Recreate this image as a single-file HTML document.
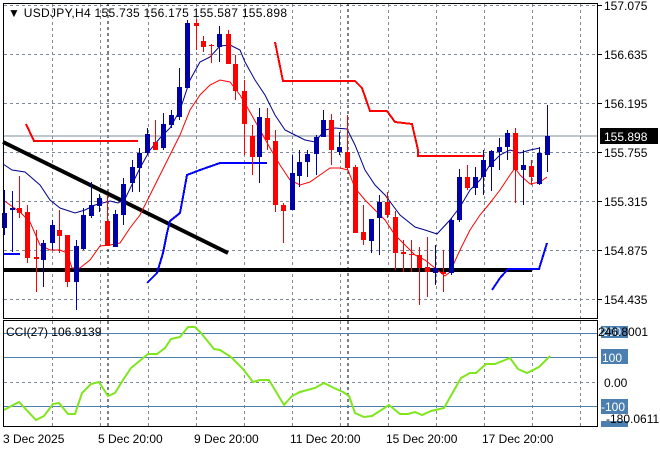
<!DOCTYPE html>
<html><head><meta charset="utf-8">
<style>
html,body{margin:0;padding:0;background:#fff;width:660px;height:450px;overflow:hidden}
svg{display:block}
text{font-family:"Liberation Sans",sans-serif;font-size:12px;fill:#000}
</style></head><body>
<svg id="s" width="660" height="450" viewBox="0 0 660 450" xmlns="http://www.w3.org/2000/svg" shape-rendering="crispEdges">
<rect x="0" y="0" width="660" height="450" fill="#fff"/>
<g id="grid" stroke="#7f8a96" stroke-width="1" stroke-dasharray="3,3" fill="none"></g>
<line x1="108" y1="3" x2="108" y2="427" stroke="#000" stroke-dasharray="3,3"/>
<line x1="348" y1="3" x2="348" y2="427" stroke="#000" stroke-dasharray="3,3"/>
<line x1="3" y1="136" x2="598" y2="136" stroke="#7f8c99"/>
<g id="ind" fill="none"></g>
<g id="candles"></g>
<g id="cci" fill="none"></g>
<rect x="3.5" y="3.5" width="594" height="315" fill="none" stroke="#000"/>
<rect x="3.5" y="320.5" width="594" height="106" fill="none" stroke="#000"/>
<g id="ticks" stroke="#000"></g>
<text x="8" y="17" font-size="12" textLength="279" lengthAdjust="spacing">▼ USDJPY,H4  155.735 156.175 155.587 155.898</text>
<g id="plabels"></g>
<rect x="600" y="128" width="58" height="16" fill="#000"/>
<text x="604" y="141" style="fill:#fff">155.898</text>
<text x="6" y="336" font-size="12">CCI(27) 106.9139</text>
<rect x="601" y="326" width="27" height="12" fill="#4a7fb0"/>
<text x="601" y="336" style="fill:#fff">200</text>
<text x="598" y="336">246.8001</text>
<rect x="601" y="349" width="27" height="15" fill="#4a7fb0"/>
<text x="602" y="362" style="fill:#fff">100</text>
<text x="604" y="387">0.00</text>
<rect x="601" y="399" width="27" height="15" fill="#4a7fb0"/>
<text x="601" y="411" style="fill:#fff">-100</text>
<rect x="601" y="421" width="27" height="6" fill="#4a7fb0"/>
<text x="606" y="423">-180.0611</text>
<text x="3" y="443">3 Dec 2025</text>
<text x="98" y="443">5 Dec 20:00</text>
<text x="194" y="443">9 Dec 20:00</text>
<text x="290" y="443">11 Dec 20:00</text>
<text x="386" y="443">15 Dec 20:00</text>
<text x="482" y="443">17 Dec 20:00</text>
</svg>
<script>
var NS="http://www.w3.org/2000/svg";
function el(p,t,a){var e=document.createElementNS(NS,t);for(var k in a)e.setAttribute(k,a[k]);document.getElementById(p).appendChild(e);return e;}
var gx=[52,100,148,196,244,292,340,388,436,484,532,580];
gx.forEach(function(x){el("grid","line",{x1:x+.5,y1:4,x2:x+.5,y2:318});el("grid","line",{x1:x+.5,y1:321,x2:x+.5,y2:426});});
var gy=[5,54,103,152,201,250,299];
gy.forEach(function(y){el("grid","line",{x1:4,y1:y+.5,x2:597,y2:y+.5});el("ticks","line",{x1:598,y1:y+.5,x2:602,y2:y+.5});});
var pl=["157.075","156.635","156.195","155.755","155.315","154.875","154.435"];
pl.forEach(function(t,i){var e=el("plabels","text",{x:604,y:gy[i]+5});e.textContent=t;});
el("grid","line",{x1:4,y1:382.5,x2:597,y2:382.5});
[333,357,406].forEach(function(y){el("cci","line",{x1:4,y1:y+.5,x2:597,y2:y+.5,stroke:"#4a7fb0"});});
function pts(a){return a.map(function(p){return p.join(",");}).join(" ");}
el("ind","polyline",{stroke:"#000","stroke-width":4,points:"3,270 532,270","shape-rendering":"auto"});
el("ind","polyline",{stroke:"#000","stroke-width":4,points:"3,142 228,253","shape-rendering":"auto"});
el("ind","polyline",{stroke:"#f00","stroke-width":2,points:pts([[26,124],[34,141],[138,141]])});
el("ind","polyline",{stroke:"#f00","stroke-width":2,points:pts([[275,42],[283,81],[355,81],[362,88],[370,111],[387,111],[395,122],[412,124],[418,150],[418,156],[483,156]])});
el("ind","polyline",{stroke:"#00f","stroke-width":2,points:"3,254 20,254"});
el("ind","polyline",{stroke:"#00f","stroke-width":2,points:pts([[147,283],[157,273],[163,253],[167,233],[170,221],[180,213],[183,197],[187,175],[200,170],[220,163],[267,163]])});
el("ind","polyline",{stroke:"#00f","stroke-width":2,points:pts([[492,290],[500,278],[508,269],[539,269],[547,243]])});
el("ind","polyline",{stroke:"#00008b","stroke-width":1,"shape-rendering":"auto",points:pts([[3,164],[12,170],[25,172],[40,185],[50,200],[60,208],[75,213],[85,210],[95,205],[110,201],[118,203],[125,199],[140,168],[150,150],[160,138],[170,128],[180,110],[190,80],[200,62],[210,57],[220,46],[230,45],[240,50],[245,62],[255,80],[265,95],[275,115],[285,130],[295,135],[305,140],[315,142],[325,130],[335,128],[347,129],[355,145],[365,170],[375,185],[385,195],[400,215],[415,227],[425,230],[437,234],[450,220],[460,207],[470,190],[480,180],[490,165],[500,155],[510,150],[520,153],[530,150],[540,148]])});
el("ind","polyline",{stroke:"#f00","stroke-width":1,"shape-rendering":"auto",points:pts([[3,200],[20,212],[30,222],[40,245],[50,250],[60,250],[67,253],[72,268],[80,268],[90,260],[100,246],[110,245],[120,243],[130,228],[140,215],[150,195],[160,175],[170,155],[180,135],[190,110],[200,95],[210,85],[220,80],[230,82],[240,95],[250,112],[260,130],[270,148],[280,165],[290,180],[300,185],[310,182],[320,175],[330,168],[340,168],[348,170],[355,188],[365,200],[375,210],[385,220],[395,235],[405,245],[415,255],[425,260],[435,268],[445,276],[450,272],[460,250],[470,230],[480,215],[490,203],[500,190],[510,175],[515,168],[520,175],[530,184],[540,182],[547,177]])});
var C=[[4,213,228,190,235,'b'],[12,208,210,191,252,'b'],[19,208,213,176,218,'r'],[27,212,258,205,263,'r'],[36,257,259,230,292,'r'],[43,243,260,240,287,'b'],[52,225,243,220,250,'b'],[59,230,236,210,253,'r'],[67,235,282,235,287,'r'],[76,246,282,240,310,'b'],[83,215,249,208,250,'b'],[91,205,216,182,218,'b'],[99,198,206,194,212,'b'],[107,221,246,195,246,'r'],[115,214,247,210,247,'b'],[123,184,215,178,225,'b'],[132,167,183,160,192,'b'],[139,153,168,148,192,'b'],[147,134,153,128,155,'b'],[155,142,150,120,150,'r'],[163,124,148,113,150,'b'],[171,115,125,110,128,'b'],[179,87,117,68,120,'b'],[187,23,88,20,88,'b'],[196,23,26,19,50,'r'],[203,41,47,36,52,'r'],[211,45,46,44,63,'r'],[219,34,47,26,62,'b'],[228,34,64,30,64,'r'],[235,64,91,55,100,'r'],[244,91,124,80,155,'r'],[252,136,157,125,175,'r'],[259,117,157,108,183,'b'],[267,118,140,108,150,'r'],[275,141,205,130,212,'r'],[283,205,211,203,243,'r'],[292,173,210,155,210,'b'],[299,162,176,150,187,'b'],[307,154,162,150,177,'b'],[316,137,154,135,175,'b'],[323,120,137,110,137,'b'],[331,120,150,114,165,'r'],[339,147,152,132,155,'b'],[347,152,168,115,170,'r'],[355,167,233,165,233,'r'],[363,232,240,205,245,'r'],[371,219,241,219,253,'b'],[379,202,218,195,255,'b'],[387,202,215,192,218,'r'],[395,217,253,211,270,'r'],[403,252,254,240,272,'r'],[411,254,255,240,272,'r'],[419,255,268,247,305,'r'],[427,267,272,237,297,'r'],[435,268,273,245,285,'b'],[443,272,274,250,292,'r'],[451,220,273,218,275,'b'],[459,177,220,169,222,'b'],[467,177,188,165,190,'r'],[475,177,188,167,195,'b'],[483,160,177,150,195,'b'],[491,151,167,150,191,'b'],[499,147,152,138,170,'b'],[507,133,147,130,160,'b'],[515,133,170,128,203,'r'],[523,165,170,150,205,'b'],[531,166,177,160,185,'r'],[539,153,184,147,185,'b'],[547,136,155,105,172,'b']];
C.forEach(function(c){var col=c[5]=='b'?'#0000a8':'#f00';
 el("candles","rect",{x:c[0],y:c[3],width:1,height:c[4]-c[3],fill:col});
 el("candles","rect",{x:c[0]-2,y:c[1],width:5,height:Math.max(1,c[2]-c[1]),fill:col});});
el("cci","polyline",{stroke:"#7fe61e","stroke-width":2,"shape-rendering":"auto",points:pts([[4,410],[19,402],[36,420],[44,416],[53,404],[59,403],[68,414],[75,414],[82,393],[91,384],[99,382],[108,396],[115,393],[123,380],[131,368],[148,354],[157,354],[165,348],[171,339],[180,337],[188,327],[195,327],[201,333],[214,349],[220,350],[231,357],[243,369],[253,382],[260,380],[269,380],[284,405],[292,396],[300,392],[315,388],[324,383],[334,388],[343,392],[349,396],[355,413],[364,417],[372,416],[389,405],[400,414],[408,414],[415,412],[422,415],[431,411],[444,408],[461,378],[470,373],[476,373],[486,364],[495,364],[510,358],[518,369],[527,373],[539,367],[550,356]])});
</script>
</body></html>
